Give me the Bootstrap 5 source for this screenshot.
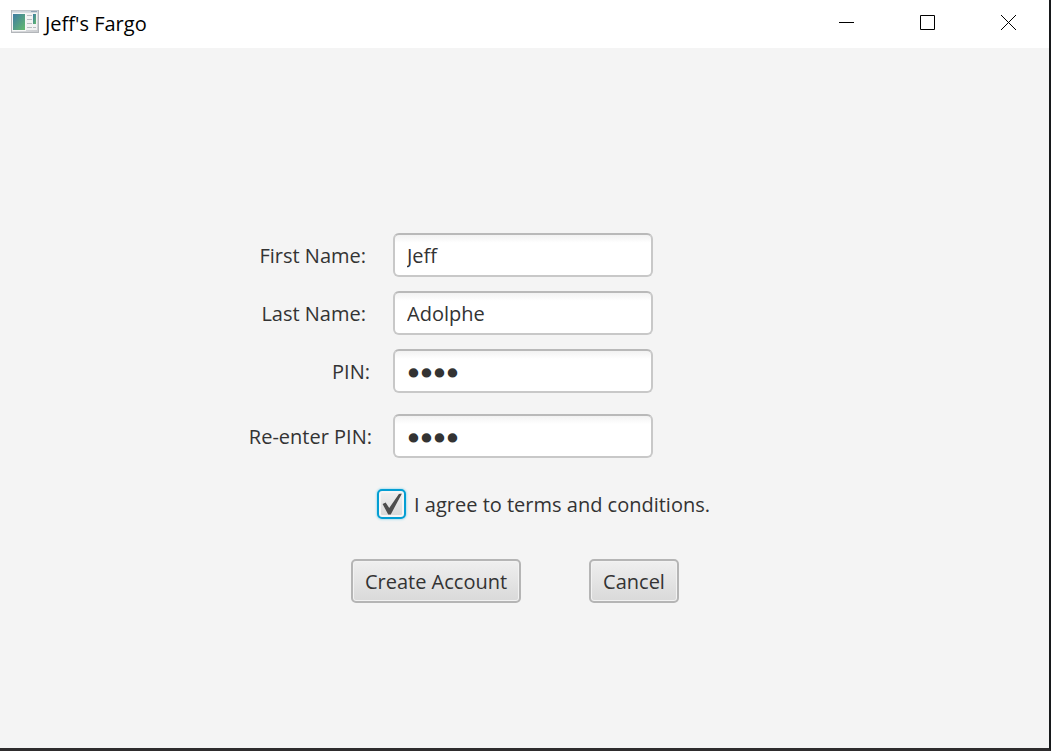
<!DOCTYPE html>
<html lang="en">
<head>
<meta charset="utf-8">
<meta name="viewport" content="width=device-width, initial-scale=1">
<title>Jeff's Fargo</title>
<link href="https://cdn.jsdelivr.net/npm/bootstrap@5.3.0/dist/css/bootstrap.min.css" rel="stylesheet">
<style>
  body { font-family: "Open Sans", "Noto Sans", sans-serif; font-size: 20px; line-height: 28px; color: #333; background: #f4f4f4; }
  .window-frame { border-right: 2px solid #17191b; border-bottom: 3px solid #2e2c2d; }
  .title-bar { height: 48px; background: #fff; color: #000; padding-left: 11px; }
  .app-title { margin-left: 6px; }
  .win-btn { width: 81px; height: 48px; padding: 0 0 8px; border: 0; background: transparent; }
  .app-main { padding: 185px 91px 0 0; }
  .signup { width: 462px; }
  .signup label { padding-top: 2px; }
  .field-row { gap: 21px; margin-bottom: 14px; }
  .pin-row { margin-bottom: 21px; }
  .field-label { width: 124px; text-align: right; white-space: nowrap; }
  .name-label { padding-right: 6px; }
  .pin-label { padding-right: 2px; }
  .fx-input { width: 260px; height: 44px; padding: 0 12px; font-size: 20px; line-height: 28px; color: #333; border: 2px solid #c8c8c8; border-top-color: #b9b9b9; border-radius: 6px; background: linear-gradient(#f2f2f2, #fff 8px); }
  .fx-input[type=password] { font-family: "DejaVu Sans", sans-serif; font-size: 22px; padding-top: 4px; -webkit-text-stroke: 3px #333; }
  .fx-input:focus { color: #333; border-color: #039ed3; box-shadow: none; }
  .agree-row { padding-left: 129px; margin-top: 31px; }
  .fx-check.form-check-input { width: 30px; height: 30px; margin: 0; border: 2px solid #039ed3; border-radius: 5px; box-shadow: 0 0 2px 1px #b5e1ef, inset 0 0 0 2px #f5f5f5; background-color: #e2e2e2; }
  .fx-check.form-check-input:checked { background-image: url("data:image/svg+xml,%3Csvg xmlns='http://www.w3.org/2000/svg' viewBox='0 0 26 26'%3E%3Cpath d='M4 13l3-1.500 3.500 5.500L20 3l3-.5L12 23.500H9.500z' fill='%234d4d4d'/%3E%3C/svg%3E"), linear-gradient(#f0f0f0, #d8d8d8); background-size: 26px 26px; }
  .actions { padding-left: 103px; margin-top: 40px; gap: 68px; }
  .fx-btn { height: 44px; padding: 2px 0 0; font-size: 20px; line-height: 28px; color: #333; border: 2px solid #b5b5b5; border-radius: 5px; background: linear-gradient(#efefef, #d9d9d9); box-shadow: inset 0 0 0 1px #f2f2f2; }
  .create-btn { width: 170px; }
  .cancel-btn { width: 90px; }
</style>
</head>
<body>
<div class="window-frame d-flex flex-column min-vh-100">
  <header class="title-bar d-flex align-items-center">
    <svg width="28" height="24" viewBox="0 0 28 24" aria-hidden="true" class="mb-1">
      <defs>
        <linearGradient id="pane" x1="0" y1="0" x2="1" y2="1"><stop offset="0" stop-color="#3c79a5"/><stop offset="1" stop-color="#66bd6b"/></linearGradient>
        <linearGradient id="shell" x1="0" y1="0" x2="1" y2="1"><stop offset="0" stop-color="#eef0f2"/><stop offset="1" stop-color="#c9cbce"/></linearGradient>
      </defs>
      <rect x=".5" y=".5" width="27" height="22" fill="url(#shell)" stroke="#b3b6ba"/>
      <path d="M1 1.5h26" stroke="#cfd6dd" stroke-width="2"/>
      <path d="M20 1.5h6" stroke="#8fa3b5"/>
      <rect x="1.5" y="3.5" width="13" height="17" fill="url(#pane)" stroke="#f8f8f8"/>
      <rect x="15" y="3" width="11" height="17" fill="#f3f3f3"/>
      <path d="M16 5.500h5M16 9.500h5M16 13.500h5M16 17.500h5M22 17.500h3" stroke="#b9bdc1"/>
      <rect x="22" y="4" width="3" height="10" fill="url(#pane)"/>
    </svg>
    <span class="app-title">Jeff's Fargo</span>
    <div class="d-flex ms-auto">
      <button type="button" class="win-btn" aria-label="Minimize"><svg width="16" height="16" viewBox="0 0 16 16"><path d="M0 8.500h15" stroke="#000"/></svg></button>
      <button type="button" class="win-btn" aria-label="Maximize"><svg width="16" height="16" viewBox="0 0 16 16"><path d="M.5 1.500h14v14H.5z" fill="none" stroke="#000"/></svg></button>
      <button type="button" class="win-btn" aria-label="Close"><svg width="16" height="16" viewBox="0 0 16 16"><path d="M0 1l15 15M15 1L0 16" stroke="#000"/></svg></button>
    </div>
  </header>
  <main class="app-main flex-grow-1">
    <form class="signup mx-auto">
      <div class="field-row d-flex align-items-center">
        <label class="field-label name-label" for="first">First Name:</label>
        <input class="form-control fx-input" id="first" type="text" value="Jeff">
      </div>
      <div class="field-row d-flex align-items-center">
        <label class="field-label name-label" for="last">Last Name:</label>
        <input class="form-control fx-input" id="last" type="text" value="Adolphe">
      </div>
      <div class="field-row pin-row d-flex align-items-center">
        <label class="field-label pin-label" for="pin">PIN:</label>
        <input class="form-control fx-input" id="pin" type="password" value="1234">
      </div>
      <div class="field-row d-flex align-items-center">
        <label class="field-label" for="pin2">Re-enter PIN:</label>
        <input class="form-control fx-input" id="pin2" type="password" value="1234">
      </div>
      <div class="agree-row d-flex align-items-center">
        <input class="form-check-input fx-check" id="agree" type="checkbox" checked>
        <label class="text-nowrap ms-2" for="agree">I agree to terms and conditions.</label>
      </div>
      <div class="actions d-flex">
        <button type="submit" class="btn fx-btn create-btn">Create Account</button>
        <button type="button" class="btn fx-btn cancel-btn">Cancel</button>
      </div>
    </form>
  </main>
</div>
<script src="https://cdn.jsdelivr.net/npm/bootstrap@5.3.0/dist/js/bootstrap.bundle.min.js"></script>
</body>
</html>
